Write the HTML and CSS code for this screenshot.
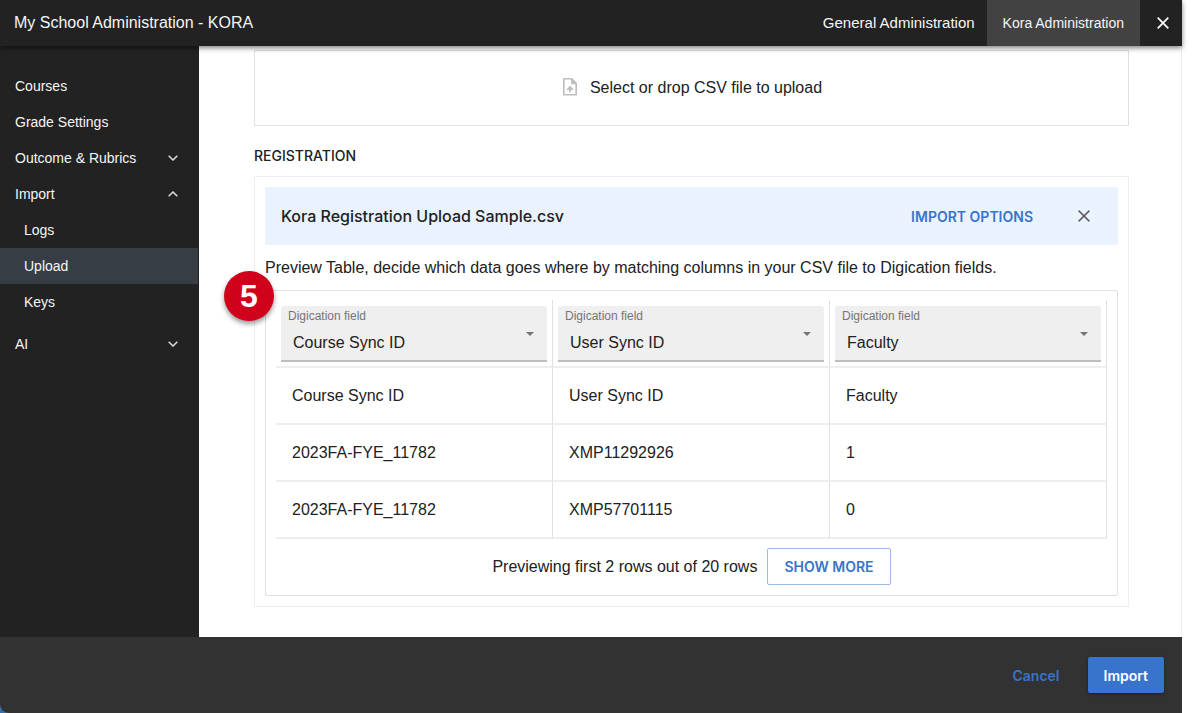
FILE: index.html
```html
<!DOCTYPE html>
<html lang="en">
<head>
    <meta charset="UTF-8">
    <meta name="viewport" content="width=device-width, initial-scale=1.0">
    <title>My School Administration - KORA</title>
    <link rel="stylesheet" href="styles.css">
</head>
<body>
    <div class="app">
        <header class="topbar">
            <h1 class="topbar-title">My School Administration - KORA</h1>
            <nav class="tabs">
                <a href="#" class="tab tab-general">General Administration</a>
                <a href="#" class="tab active">Kora Administration</a>
            </nav>
            <button class="close-button" type="button" aria-label="Close">
                <svg width="12" height="12" viewBox="0 0 12 12" fill="none" stroke="currentColor" stroke-width="1.7"><path d="M.7.7l10.6 10.6M11.3.7L.7 11.3"/></svg>
            </button>
        </header>

        <div class="content">
            <nav class="sidebar">
                <a href="#" class="nav-item">Courses</a>
                <a href="#" class="nav-item">Grade Settings</a>
                <a href="#" class="nav-item">Outcome &amp; Rubrics
                    <svg class="chevron" viewBox="0 0 10 6"><path d="M.7.7L5 5 9.3.7"/></svg>
                </a>
                <a href="#" class="nav-item">Import
                    <svg class="chevron" viewBox="0 0 10 6"><path d="M.7 5.3L5 1l4.3 4.3"/></svg>
                </a>
                <div class="nav-group">
                    <a href="#" class="nav-item nav-sub">Logs</a>
                    <a href="#" class="nav-item nav-sub active">Upload</a>
                    <a href="#" class="nav-item nav-sub">Keys</a>
                </div>
                <a href="#" class="nav-item">AI
                    <svg class="chevron" viewBox="0 0 10 6"><path d="M.7.7L5 5 9.3.7"/></svg>
                </a>
            </nav>

            <main class="main">
                <label class="dropzone">
                    <input class="file-input" type="file" accept=".csv">
                    <svg width="18" height="20" viewBox="0 0 18 20" fill="none" stroke="#bdbdbd">
                        <path stroke-width="1.6" stroke-linejoin="round" d="M2.8.8h7.8l4.6 4.6v11.4H2.8z"/>
                        <path fill="#bdbdbd" stroke="none" d="M10.2.5h.8l4.8 4.8v1h-5.6z"/>
                        <path stroke-width="1.8" d="M9 14.2V9.4M6.2 11.8L9 9l2.8 2.8"/>
                    </svg>
                    <span>Select or drop CSV file to upload</span>
                </label>

                <h2 class="section-title">REGISTRATION</h2>

                <section class="card">
                    <div class="file-bar">
                        <span class="file-name">Kora Registration Upload Sample.csv</span>
                        <button class="link-button" type="button">IMPORT OPTIONS</button>
                        <button class="remove-button" type="button" aria-label="Remove file">
                            <svg width="12" height="12" viewBox="0 0 12 12" fill="none" stroke="currentColor" stroke-width="1.5"><path d="M.6.6l10.8 10.8M11.4.6L.6 11.4"/></svg>
                        </button>
                    </div>

                    <p class="hint">Preview Table, decide which data goes where by matching columns in your CSV file to Digication fields.</p>

                    <div class="preview">
                        <span class="step-badge">5</span>
                        <table class="preview-table">
                            <thead>
                                <tr>
                                    <th>
                                        <div class="field">
                                            <label for="field-1">Digication field</label>
                                            <select id="field-1"><option>Course Sync ID</option></select>
                                            <svg class="arrow" viewBox="0 0 8 4"><path d="M0 0h8L4 4z"/></svg>
                                        </div>
                                    </th>
                                    <th>
                                        <div class="field">
                                            <label for="field-2">Digication field</label>
                                            <select id="field-2"><option>User Sync ID</option></select>
                                            <svg class="arrow" viewBox="0 0 8 4"><path d="M0 0h8L4 4z"/></svg>
                                        </div>
                                    </th>
                                    <th>
                                        <div class="field">
                                            <label for="field-3">Digication field</label>
                                            <select id="field-3"><option>Faculty</option></select>
                                            <svg class="arrow" viewBox="0 0 8 4"><path d="M0 0h8L4 4z"/></svg>
                                        </div>
                                    </th>
                                </tr>
                            </thead>
                            <tbody>
                                <tr>
                                    <td>Course Sync ID</td>
                                    <td>User Sync ID</td>
                                    <td>Faculty</td>
                                </tr>
                                <tr>
                                    <td>2023FA-FYE_11782</td>
                                    <td>XMP11292926</td>
                                    <td>1</td>
                                </tr>
                                <tr>
                                    <td>2023FA-FYE_11782</td>
                                    <td>XMP57701115</td>
                                    <td>0</td>
                                </tr>
                            </tbody>
                        </table>
                        <div class="preview-footer">
                            <span>Previewing first 2 rows out of 20 rows</span>
                            <button class="outline-button" type="button">SHOW MORE</button>
                        </div>
                    </div>
                </section>
            </main>
        </div>

        <footer class="actions">
            <button class="cancel-button" type="button">Cancel</button>
            <button class="import-button" type="button">Import</button>
        </footer>
    </div>
</body>
</html>
```
FILE: styles.css
```css
:root {
    --dark: #222222;
    --blue: #3874cb;
    --text: #212121;
    --line: #e0e0e0;
    --line-light: #eeeeee;
    --font-medium: Inter, "Helvetica Neue", "Liberation Sans", sans-serif;
}

* {
    margin: 0;
    padding: 0;
    box-sizing: border-box;
}

body {
    font-family: "Helvetica Neue", Helvetica, "Liberation Sans", Arial, sans-serif;
    font-size: 16px;
    line-height: 20px;
    color: var(--text);
    background: white;
    padding-right: 18px;
}

button,
select {
    font-family: inherit;
    border: none;
    background: none;
    cursor: pointer;
}

a {
    color: inherit;
    text-decoration: none;
}

svg {
    display: block;
    flex-shrink: 0;
}

.app {
    display: flex;
    flex-direction: column;
    height: 100vh;
    background: linear-gradient(to right, #3a6ea5 20px, white 20px);
}

/* Top bar */
.topbar {
    display: flex;
    align-items: stretch;
    flex-shrink: 0;
    height: 46px;
    padding-left: 14px;
    background: var(--dark);
    color: #f5f5f5;
    box-shadow: 0 2px 5px rgba(0, 0, 0, 0.5);
    position: relative;
    z-index: 1;
}

.topbar-title {
    flex: 1;
    align-self: center;
    font-size: 16px;
    font-weight: 400;
}

.tabs {
    display: flex;
}

.tab {
    display: flex;
    align-items: center;
    padding: 0 16px;
    font-size: 14px;
}

.tab-general {
    padding: 0 12px;
    font-size: 15px;
}

.tab.active {
    background: #424242;
}

.close-button {
    display: flex;
    align-items: center;
    justify-content: center;
    width: 42px;
    padding-left: 4px;
    color: white;
}

/* Sidebar */
.content {
    display: flex;
    flex: 1;
    min-height: 0;
}

.sidebar {
    flex-shrink: 0;
    width: 199px;
    padding: 22px 1px 0 0;
    background: var(--dark);
    color: #f5f5f5;
}

.nav-item {
    display: flex;
    align-items: center;
    justify-content: space-between;
    height: 36px;
    padding: 0 20px 0 15px;
    font-size: 14px;
}

.nav-group {
    margin-bottom: 6px;
}

.nav-sub {
    padding-left: 24px;
}

.nav-item.active {
    background: #363d45;
}

.chevron {
    width: 10px;
    height: 6px;
    fill: none;
    stroke: #dddddd;
    stroke-width: 1.5;
}

/* Main area */
.main {
    flex: 1;
    min-width: 0;
    padding: 4px 52px 0 55px;
    background: white;
    border-right: 1px solid var(--line-light);
    overflow: hidden;
}

.dropzone {
    display: flex;
    align-items: center;
    justify-content: center;
    gap: 11px;
    height: 76px;
    border: 1px solid var(--line);
    cursor: pointer;
}

.file-input {
    position: absolute;
    width: 1px;
    height: 1px;
    opacity: 0;
}

.section-title {
    margin: 20px 0 10px;
    font-family: var(--font-medium);
    font-size: 14px;
    font-weight: 500;
}

.card {
    padding: 10px;
    border: 1px solid var(--line-light);
}

.file-bar {
    display: flex;
    align-items: center;
    height: 58px;
    padding: 0 16px;
    background: #eaf2fe;
    border-radius: 2px;
}

.file-name {
    flex: 1;
    font-family: var(--font-medium);
    font-weight: 500;
}

.link-button {
    padding: 8px;
    font-family: var(--font-medium);
    font-size: 14px;
    font-weight: 600;
    color: var(--blue);
}

.remove-button {
    margin-left: 25px;
    padding: 12px;
    color: #616161;
}

.hint {
    padding: 13px 0 12px;
}

/* Preview table */
.preview {
    position: relative;
    padding: 9px 10px 10px;
    border: 1px solid var(--line);
    border-radius: 2px;
}

.step-badge {
    position: absolute;
    top: -20px;
    left: -42px;
    width: 50px;
    height: 50px;
    border-radius: 50%;
    background: #d0021b;
    color: white;
    font-size: 32px;
    font-weight: 700;
    line-height: 50px;
    text-align: center;
    box-shadow: 0 3px 5px rgba(0, 0, 0, 0.4);
}

.preview-table {
    width: 100%;
    table-layout: fixed;
    border-collapse: separate;
    border-spacing: 0;
}

.preview-table th,
.preview-table td {
    border-right: 1px solid var(--line);
    border-bottom: 2px solid var(--line-light);
    text-align: left;
    font-weight: 400;
}

.preview-table th {
    padding: 6px 5px 4px;
}

.preview-table td {
    height: 57px;
    padding: 0 16px;
}

.field {
    position: relative;
    height: 56px;
    background: #efefef;
    border-bottom: 2px solid #bdbdbd;
    border-radius: 3px 3px 0 0;
}

.field label {
    display: block;
    padding: 2px 7px 0;
    font-size: 12px;
    line-height: 16px;
    color: #757575;
}

.field select {
    display: block;
    width: 100%;
    height: 36px;
    padding-left: 12px;
    appearance: none;
    font-size: 16px;
    color: var(--text);
}

.arrow {
    position: absolute;
    top: 26px;
    right: 13px;
    width: 8px;
    height: 4px;
    fill: #757575;
    pointer-events: none;
}

.preview-footer {
    display: flex;
    align-items: center;
    justify-content: center;
    gap: 10px;
    padding-top: 9px;
}

.outline-button {
    height: 37px;
    padding: 0 16px;
    font-family: var(--font-medium);
    font-size: 14px;
    font-weight: 600;
    color: var(--blue);
    border: 1px solid #9bbae5;
    border-radius: 2px;
}

/* Bottom actions */
.actions {
    display: flex;
    align-items: center;
    justify-content: flex-end;
    gap: 20px;
    flex-shrink: 0;
    height: 76px;
    padding: 0 18px;
    background: #323232;
    border-bottom-left-radius: 9px;
}

.cancel-button,
.import-button {
    font-family: var(--font-medium);
    font-size: 14px;
    font-weight: 600;
}

.cancel-button {
    padding: 8px;
    color: var(--blue);
}

.import-button {
    height: 36px;
    padding: 0 16px;
    background: var(--blue);
    color: white;
    border-radius: 2px;
    box-shadow: 0 1px 3px rgba(0, 0, 0, 0.4);
}
```
